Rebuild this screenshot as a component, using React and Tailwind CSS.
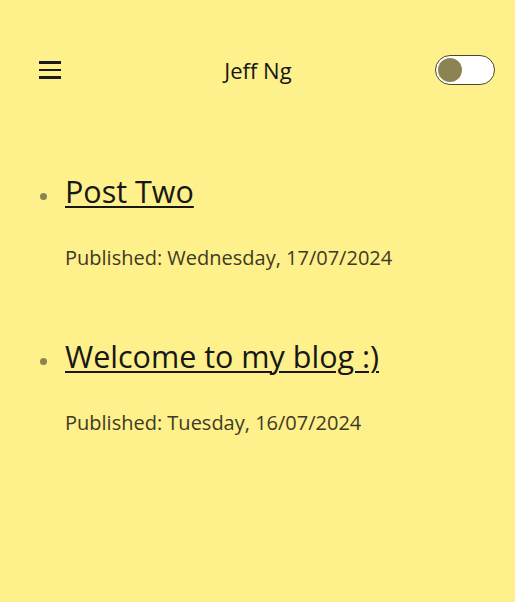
import React, { useState } from "react";

const posts = [
  { title: "Post Two", published: "Wednesday, 17/07/2024" },
  { title: "Welcome to my blog :)", published: "Tuesday, 16/07/2024" },
];

const App = () => {
  const [dark, setDark] = useState(false);

  return (
    <div className="min-h-screen w-full bg-[#fef08a] text-[#171717] font-['Open_Sans',sans-serif]">
      {/* Header */}
      <header className="flex items-center justify-between pl-[39px] pr-[20px] pt-[55px]">
        <button className="flex h-[30px] w-[22px] flex-col justify-center gap-[5px]">
          <span className="block h-[2.5px] w-[22px] bg-[#1a1a1a]" />
          <span className="block h-[2.5px] w-[22px] bg-[#1a1a1a]" />
          <span className="block h-[2.5px] w-[22px] bg-[#1a1a1a]" />
        </button>
        <h1 className="text-[22px] leading-[30px] ml-[20px]">Jeff Ng</h1>
        <button
          onClick={() => setDark(!dark)}
          className="flex h-[30px] w-[60px] items-center rounded-full border-[1.5px] border-[#4a4630] bg-white px-[2px]"
        >
          <span className="block h-[24px] w-[24px] rounded-full bg-[#8b8452]" />
        </button>
      </header>

      {/* Posts */}
      <ul className="mt-[86px] pl-[40px]">
        {posts.map((post) => (
          <li key={post.title} className="mb-[64px] flex">
            <span className="mt-[22px] mr-[18px] block h-[7px] w-[7px] shrink-0 rounded-full bg-[#8b8452]" />
            <div>
              <a href="#" className="text-[30.5px] leading-[40px] underline decoration-[1.5px] underline-offset-[3px]">
                {post.title}
              </a>
              <p className="mt-[33px] text-[20px] leading-[28px] text-[#3f3a26]">
                Published: {post.published}
              </p>
            </div>
          </li>
        ))}
      </ul>
    </div>
  );
};

export default App;
